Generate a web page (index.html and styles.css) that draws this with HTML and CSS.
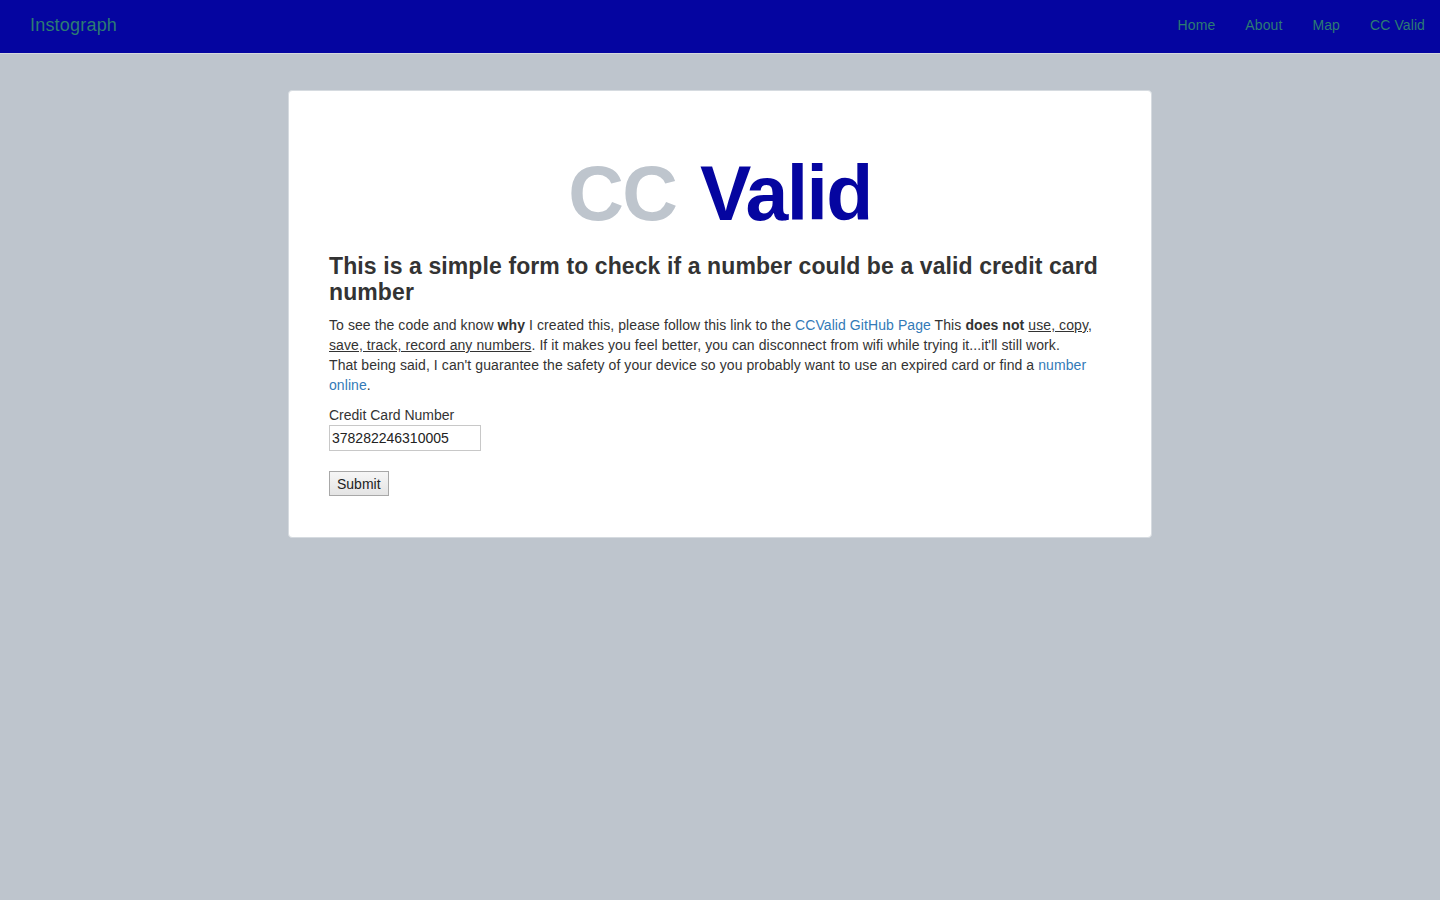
FILE: index.html
```html
<!DOCTYPE html>
<html>
<head>
<meta charset="utf-8">
<title>CC Valid</title>
<link rel="stylesheet" href="styles.css">
</head>
<body>
<nav class="navbar">
  <a class="brand" href="#">Instograph</a>
  <ul class="nav">
    <li><a href="#">Home</a></li>
    <li><a href="#">About</a></li>
    <li><a href="#">Map</a></li>
    <li><a href="#">CC Valid</a></li>
  </ul>
</nav>
<main class="page">
  <section class="card">
    <h1 class="title"><span class="cc">CC</span> <span class="valid">Valid</span></h1>
    <h3 class="subtitle">This is a simple form to check if a number could be a valid credit card number</h3>
    <p class="intro">To see the code and know <b>why</b> I created this, please follow this link to the <a href="#">CCValid GitHub Page</a> This <b>does not</b> <u>use, copy, save, track, record any numbers</u>. If it makes you feel better, you can disconnect from wifi while trying it...it'll still work.<br>That being said, I can't guarantee the safety of your device so you probably want to use an expired card or find a <a href="#">number online</a>.</p>
    <form class="form">
      <label class="label" for="cc">Credit Card Number</label>
      <input class="input" id="cc" type="text" value="378282246310005">
      <button class="submit" type="button">Submit</button>
    </form>
  </section>
</main>
</body>
</html>
```

FILE: styles.css
```css
* { box-sizing: border-box; }
html, body { margin: 0; padding: 0; }
body {
  background: #bec5cd;
  font-family: "Liberation Sans", Arial, Helvetica, sans-serif;
  font-size: 14px;
  line-height: 20px;
  color: #333;
  min-height: 900px;
}
.navbar {
  height: 54px;
  background: #0505a0;
  border-bottom: 1px solid #d4d8de;
  display: flex;
  align-items: center;
  justify-content: space-between;
  padding: 0 0 3px 30px;
}
.brand {
  color: #2c7c72;
  font-size: 18px;
  letter-spacing: 0.2px;
  text-decoration: none;
  line-height: 20px;
}
.nav {
  list-style: none;
  margin: 0;
  padding: 0;
  display: flex;
}
.nav a {
  display: block;
  padding: 15px 15px;
  color: #2c7c72;
  text-decoration: none;
  font-size: 14px;
  letter-spacing: 0.1px;
  line-height: 20px;
}
.page {
  display: flex;
  justify-content: center;
  padding-top: 36px;
}
.card {
  width: 864px;
  background: #fff;
  border: 1px solid #d6dbe0;
  border-radius: 4px;
  padding: 55px 40px 41px;
}
.title {
  margin: 0;
  text-align: center;
  font-size: 77px;
  font-weight: bold;
  line-height: 94px;
  letter-spacing: -1.6px;
  word-spacing: 4px;
}
.cc { color: #bec5cd; }
.valid { color: #0505a0; }
.subtitle {
  margin: 13px 0 10px;
  font-size: 23px;
  font-weight: bold;
  line-height: 26px;
  letter-spacing: 0.1px;
  color: #333;
}
.intro { margin: 0 0 10px; letter-spacing: 0.08px; }
.intro a { color: #337ab7; text-decoration: none; }
.intro u { text-decoration: underline; }
.form { display: flex; flex-direction: column; align-items: flex-start; }
.label { display: block; margin-top: 0; line-height: 20px; }
.input {
  width: 152px;
  height: 26px;
  border: 1px solid #c8c8c8;
  padding: 2px 2px;
  font-family: "Liberation Sans", Arial, sans-serif;
  font-size: 14px;
  color: #222;
  margin: 0;
}
.submit {
  margin-top: 20px;
  height: 25px;
  padding: 0 7px;
  border: 1px solid #a8a8a8;
  background: linear-gradient(#f6f6f6, #e4e4e4);
  font-family: "Liberation Sans", Arial, sans-serif;
  font-size: 14px;
  color: #222;
  border-radius: 0;
}
```
